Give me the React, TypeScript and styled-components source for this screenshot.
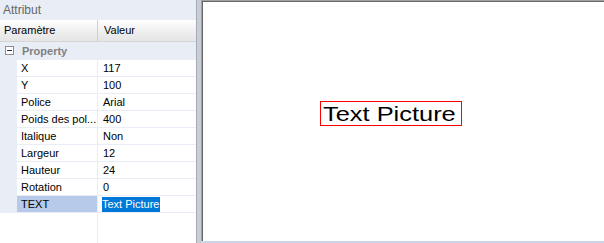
import React from 'react'
import styled, { createGlobalStyle } from 'styled-components'

/**
 * ------------------------ TYPES ------------------------------
 */
interface Prop {
  name: string
  value: string
}

/**
 * ------------------------- STYLES -------------------------------
 */
const Global = createGlobalStyle`
  html, body {
    margin: 0;
    padding: 0;
    background: #e9edf6;
    font-family: "Liberation Sans", Arial, sans-serif;
  }
`

const Window = styled.div`
  display: flex;
  width: 604px;
  height: 243px;
  overflow: hidden;
`

// Left panel
const Side = styled.section`
  width: 196px;
  display: flex;
  flex-direction: column;
  background: #e9edf6;
  border-right: 1px solid #a7adb8;
`
const Title = styled.div`
  height: 20px;
  padding-left: 3px;
  line-height: 20px;
  font-size: 12px;
  color: #666;
`
const Grid = styled.div`
  flex: 1;
  display: flex;
  flex-direction: column;
  background: #fff;
`
const HeadRow = styled.div`
  display: grid;
  grid-template-columns: 98px 1fr;
  height: 21px;
  border-bottom: 1px solid #d5d5d5;
  background: linear-gradient(#ffffff, #f0f0f0 50%, #e5e5e5);
`
const HeadCell = styled.div<{ first?: boolean }>`
  font-size: 11px;
  line-height: 21px;
  color: #000;
  padding-left: ${p => (p.first ? '4px' : '6px')};
  ${p => p.first && 'border-right: 1px solid #d0d0d0;'}
`
const Category = styled.div`
  display: flex;
  align-items: center;
  height: 17px;
  background: #e9edf6;
  border-bottom: 1px solid #e9edf6;
`
const Toggle = styled.span`
  position: relative;
  box-sizing: border-box;
  width: 9px;
  height: 9px;
  margin-left: 5px;
  margin-right: 8px;
  border: 1px solid #8d8d8d;
  background: #fff;
  &::after {
    content: '';
    position: absolute;
    left: 1px;
    top: 3px;
    width: 5px;
    height: 1px;
    background: #333;
  }
`
const CategoryName = styled.span`
  font-size: 11px;
  font-weight: bold;
  color: #808080;
`
const Row = styled.div`
  display: grid;
  grid-template-columns: 17px 81px 1fr;
  height: 16px;
  border-bottom: 1px solid #e9edf6;
`
const Margin = styled.div`
  background: #e9edf6;
`
const NameCell = styled.div<{ selected?: boolean }>`
  padding-left: 4px;
  font-size: 11px;
  line-height: 16px;
  color: #000;
  white-space: nowrap;
  overflow: hidden;
  border-right: 1px solid #e9edf6;
  background: ${p => (p.selected ? '#b7caea' : '#fff')};
`
const ValueCell = styled.div`
  padding-left: 5px;
  font-size: 11px;
  line-height: 16px;
  color: #000;
  white-space: nowrap;
`
const Highlight = styled.span`
  display: inline-block;
  padding: 0 1px 0 0;
  margin-left: -1px;
  background: #0078d7;
  color: #fff;
  line-height: 15px;
`
const Filler = styled.div`
  flex: 1;
  display: grid;
  grid-template-columns: 98px 1fr;
`
const FillerLeft = styled.div`
  border-right: 1px solid #e9edf6;
`

// Splitter
const Splitter = styled.div`
  width: 4px;
  background: #c8cdd6;
`

// Right panel
const Canvas = styled.section`
  flex: 1;
  display: flex;
  flex-direction: column;
  background: #cbd5e8;
  padding-bottom: 2px;
`
const Sheet = styled.div`
  position: relative;
  flex: 1;
  background: #fff;
  border-top: 1px solid #a0a0a0;
  border-left: 1px solid #a0a0a0;
  box-shadow: inset 1px 1px 0 #696969;
`
const TextItem = styled.div<{ x: number; y: number }>`
  position: absolute;
  left: ${p => p.x}px;
  top: ${p => p.y}px;
  box-sizing: border-box;
  width: 142px;
  height: 25px;
  padding-left: 2px;
  border: 1px solid #ff0000;
  overflow: hidden;
`
const TextInner = styled.div`
  font-family: "Liberation Sans", Arial, sans-serif;
  font-size: 21px;
  line-height: 23px;
  color: #000;
  white-space: nowrap;
  transform: scaleX(1.21);
  transform-origin: left center;
`

/**
 * ----------------------- COMPONENT -------------------------------
 */
const props: Prop[] = [
  { name: 'X', value: '117' },
  { name: 'Y', value: '100' },
  { name: 'Police', value: 'Arial' },
  { name: 'Poids des pol...', value: '400' },
  { name: 'Italique', value: 'Non' },
  { name: 'Largeur', value: '12' },
  { name: 'Hauteur', value: '24' },
  { name: 'Rotation', value: '0' },
]

const App: React.FC = () => {
  return (
    <>
      <Global />
      <Window>
        <Side>
          <Title>Attribut</Title>
          <Grid>
            <HeadRow>
              <HeadCell first>Paramètre</HeadCell>
              <HeadCell>Valeur</HeadCell>
            </HeadRow>
            <Category>
              <Toggle />
              <CategoryName>Property</CategoryName>
            </Category>
            {props.map(p => (
              <Row key={p.name}>
                <Margin />
                <NameCell>{p.name}</NameCell>
                <ValueCell>{p.value}</ValueCell>
              </Row>
            ))}
            <Row>
              <Margin />
              <NameCell selected>TEXT</NameCell>
              <ValueCell>
                <Highlight>Text Picture</Highlight>
              </ValueCell>
            </Row>
            <Filler>
              <FillerLeft />
              <div />
            </Filler>
          </Grid>
        </Side>
        <Splitter />
        <Canvas>
          <Sheet>
            <TextItem x={118} y={100}>
              <TextInner>Text Picture</TextInner>
            </TextItem>
          </Sheet>
        </Canvas>
      </Window>
    </>
  )
}

export default App
